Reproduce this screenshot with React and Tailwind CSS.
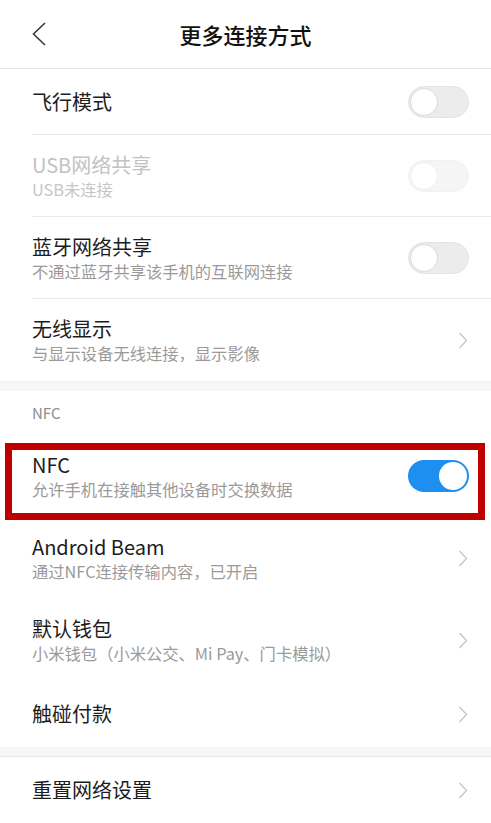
// Settings screen: 更多连接方式

function Toggle({ on = false, disabled = false }) {
  if (on) {
    return (
      <div className="flex h-[32px] w-[61px] items-center justify-end rounded-full bg-[#1d8ff0] px-[2px]">
        <div className="h-[28px] w-[28px] rounded-full bg-white" />
      </div>
    );
  }
  return (
    <div
      className={
        disabled
          ? "flex h-[32px] w-[61px] items-center rounded-full border border-[#f1f1f1] bg-[#f5f5f5] px-[1px]"
          : "flex h-[32px] w-[61px] items-center rounded-full border border-[#e4e4e4] bg-[#ececec] px-[1px]"
      }
    >
      <div
        className={
          disabled
            ? "h-[28px] w-[28px] rounded-full border border-[#eeeeee] bg-white"
            : "h-[28px] w-[28px] rounded-full border border-[#dadada] bg-white"
        }
      />
    </div>
  );
}

function Arrow() {
  return (
    <svg width="10" height="17" viewBox="0 0 10 17" className="mr-[23px]">
      <polyline
        points="1.5,1 8.5,8.5 1.5,16"
        fill="none"
        stroke="#c4c4c4"
        strokeWidth="1.3"
      />
    </svg>
  );
}

function Row({ title, sub, right, disabled, divider, tall }) {
  return (
    <div
      className={
        "flex items-center justify-between pl-[32px] " +
        (tall ? "h-[82px] " : "h-[66px] ")
      }
    >
      <div
        className={
          "flex h-full flex-1 items-center justify-between pr-[22px] " +
          (divider ? "border-b border-[#e9e9e9]" : "")
        }
      >
        <div className="flex flex-col">
          <span
            className={
              "text-[20px] leading-[26px] " +
              (disabled ? "text-[#c2c2c2]" : "text-[#1c1c1c]")
            }
          >
            {title}
          </span>
          {sub && (
            <span
              className={
                "text-[16.3px] leading-[22px] " +
                (disabled ? "text-[#c6c6c6]" : "text-[#9a9a9a]")
              }
            >
              {sub}
            </span>
          )}
        </div>
        {right}
      </div>
    </div>
  );
}

function ArrowRow({ title, sub, tall }) {
  return (
    <div
      className={
        "flex items-center justify-between pl-[32px] " +
        (tall ? "h-[82px]" : "h-[66px]")
      }
    >
      <div className="flex flex-col">
        <span className="text-[20px] leading-[26px] text-[#1c1c1c]">{title}</span>
        {sub && (
          <span className="text-[16.3px] leading-[22px] text-[#9a9a9a]">{sub}</span>
        )}
      </div>
      <Arrow />
    </div>
  );
}

export default function App() {
  return (
    <div
      className="min-h-screen w-full bg-white"
      style={{ fontFamily: '"Noto Sans CJK SC", "Noto Sans", sans-serif' }}
    >
      <header className="relative flex h-[69px] items-center justify-center border-b border-[#e6e6e6]">
        <svg
          width="16"
          height="26"
          viewBox="0 0 16 26"
          className="absolute left-[31px] top-[21px]"
        >
          <polyline
            points="14,2 2.5,13 14,24"
            fill="none"
            stroke="#3a3a3a"
            strokeWidth="1.6"
          />
        </svg>
        <h1 className="text-[22px] font-medium text-[#111]">更多连接方式</h1>
      </header>

      <Row title="飞行模式" right={<Toggle />} divider />
      <Row
        title="USB网络共享"
        sub="USB未连接"
        right={<Toggle disabled />}
        disabled
        divider
        tall
      />
      <Row
        title="蓝牙网络共享"
        sub="不通过蓝牙共享该手机的互联网连接"
        right={<Toggle />}
        divider
        tall
      />
      <ArrowRow title="无线显示" sub="与显示设备无线连接，显示影像" tall />

      <div className="h-[10px] border-t border-[#efefef] bg-[#f7f7f7]" />

      <div className="flex h-[44px] items-center pl-[32px] text-[15px] text-[#8e8e8e]">
        NFC
      </div>

      <div className="relative">
        <Row
          title="NFC"
          sub="允许手机在接触其他设备时交换数据"
          right={<Toggle on />}
          tall
        />
        <div className="pointer-events-none absolute top-[8px] right-[6px] bottom-[-3px] left-[5px] border-[7px] border-[#c00000]" />
      </div>

      <ArrowRow title="Android Beam" sub="通过NFC连接传输内容，已开启" tall />
      <ArrowRow title="默认钱包" sub="小米钱包（小米公交、Mi Pay、门卡模拟）" tall />
      <ArrowRow title="触碰付款" />

      <div className="h-[10px] border-b border-[#e9e9e9] bg-[#f7f7f7]" />

      <div className="border-b border-[#e6e6e6]">
        <ArrowRow title="重置网络设置" />
      </div>
    </div>
  );
}
